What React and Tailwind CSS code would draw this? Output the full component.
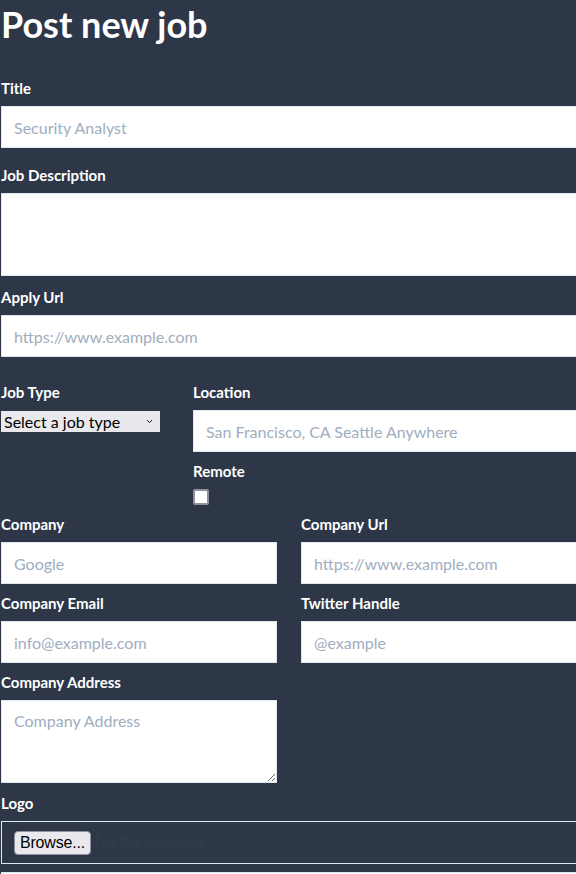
import { ChevronDown } from 'lucide-react'

function Label({ children, className = '' }) {
  return (
    <label className={`block text-[15px] font-bold leading-5 text-white ${className}`}>
      {children}
    </label>
  )
}

function TextInput({ placeholder, className = '' }) {
  return (
    <input
      type="text"
      placeholder={placeholder}
      className={`block h-[42px] w-full border border-[#e2e8f0] bg-white px-3 text-base text-gray-700 outline-none placeholder:text-[#a0aec0] ${className}`}
    />
  )
}

function TextArea({ placeholder, className = '' }) {
  return (
    <textarea
      placeholder={placeholder}
      className={`block h-[83px] w-full resize-y border border-[#e2e8f0] bg-white px-3 py-2 text-base text-gray-700 outline-none placeholder:text-[#a0aec0] ${className}`}
    />
  )
}

export default function App() {
  return (
    <div className="min-h-[874px] w-[576px] overflow-hidden bg-[#2d3748] font-['Lato',sans-serif]">
      <div className="w-[620px] pl-px">
        <h1 className="pt-px text-[36px] font-bold leading-[46px] text-white">Post new job</h1>

        <Label className="mt-[31px]">Title</Label>
        <TextInput className="mt-2" placeholder="Security Analyst" />

        <Label className="mt-[17px]">Job Description</Label>
        <TextArea className="mt-2" />

        <Label className="mt-[11px]">Apply Url</Label>
        <TextInput className="mt-2" placeholder="https://www.example.com" />

        <div className="mt-[25px] flex">
          <div className="w-[192px] shrink-0">
            <Label>Job Type</Label>
            <div className="relative mt-[9px] w-[159px]">
              <select className="block h-[21px] w-full appearance-none bg-[#e9e9ed] pl-[3px] text-base leading-[21px] text-black outline-none">
                <option>Select a job type</option>
                <option>Full Time</option>
                <option>Part Time</option>
                <option>Contract</option>
              </select>
              <ChevronDown className="pointer-events-none absolute right-[6px] top-[6px] h-[9px] w-[9px] text-black" strokeWidth={2.5} />
            </div>
          </div>
          <div className="flex-1">
            <Label>Location</Label>
            <TextInput className="mt-2" placeholder="San Francisco, CA Seattle Anywhere" />
            <Label className="mt-[9px]">Remote</Label>
            <input
              type="checkbox"
              className="mt-2 block h-4 w-4 appearance-none rounded-[2px] border-2 border-[#8f8f9d] bg-white"
            />
          </div>
        </div>

        <div className="mt-[9px] grid grid-cols-[276px_1fr] gap-x-6">
          <div>
            <Label>Company</Label>
            <TextInput className="mt-2" placeholder="Google" />
          </div>
          <div>
            <Label>Company Url</Label>
            <TextInput className="mt-2" placeholder="https://www.example.com" />
          </div>
          <div className="mt-[9px]">
            <Label>Company Email</Label>
            <TextInput className="mt-2" placeholder="info@example.com" />
          </div>
          <div className="mt-[9px]">
            <Label>Twitter Handle</Label>
            <TextInput className="mt-2" placeholder="@example" />
          </div>
          <div className="mt-[9px]">
            <Label>Company Address</Label>
            <TextArea className="mt-2" placeholder="Company Address" />
          </div>
        </div>

        <Label className="mt-[10px]">Logo</Label>
        <div className="mt-2 flex h-[43px] items-center gap-1 border border-[#e2e8f0] pl-3">
          <button className="h-6 rounded-[4px] border border-[#8f8f9d] bg-[#e9e9ed] px-[5px] font-['Liberation_Sans',sans-serif] text-base leading-none tracking-[-0.2px] text-black">
            Browse...
          </button>
          <span className="font-['Liberation_Sans',sans-serif] text-base text-[#333c4b]">No file selected.</span>
        </div>

        <div className="mt-2 h-[42px] border border-[#e2e8f0] bg-white" />
      </div>
    </div>
  )
}
